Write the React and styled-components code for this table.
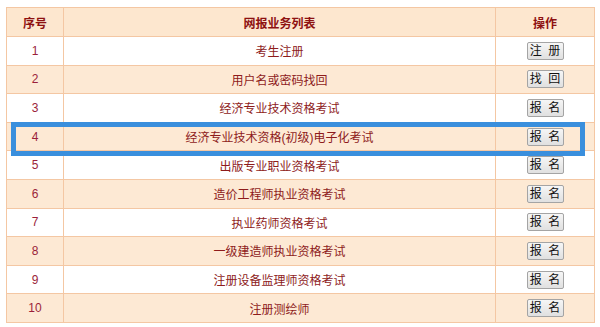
import React from 'react';
import styled, { createGlobalStyle } from 'styled-components';

const GlobalStyle = createGlobalStyle`
  html, body {
    margin: 0;
    padding: 0;
    background: #ffffff;
  }
  body {
    font-family: "Liberation Sans", "Noto Sans CJK SC", sans-serif;
  }
`;

const services = [
  { name: '考生注册', action: '注 册' },
  { name: '用户名或密码找回', action: '找 回' },
  { name: '经济专业技术资格考试', action: '报 名' },
  { name: '经济专业技术资格(初级)电子化考试', action: '报 名', marked: true },
  { name: '出版专业职业资格考试', action: '报 名' },
  { name: '造价工程师执业资格考试', action: '报 名' },
  { name: '执业药师资格考试', action: '报 名' },
  { name: '一级建造师执业资格考试', action: '报 名' },
  { name: '注册设备监理师资格考试', action: '报 名' },
  { name: '注册测绘师', action: '报 名' },
];

function App() {
  return (
    <>
      <GlobalStyle />
      <Page>
        <Table>
          <colgroup>
            <col style={{ width: 57 }} />
            <col style={{ width: 432 }} />
            <col style={{ width: 99 }} />
          </colgroup>
          <thead>
            <HeadRow>
              <HeadCell>序号</HeadCell>
              <HeadCell>网报业务列表</HeadCell>
              <HeadCell>操作</HeadCell>
            </HeadRow>
          </thead>
          <tbody>
            {services.map((s, i) => (
              <Row key={s.name} $shaded={i % 2 === 1}>
                <NumCell>{i + 1}</NumCell>
                <NameCell>
                  {s.name}
                  {s.marked && <Marker />}
                </NameCell>
                <Cell>
                  <ActionButton type="button">{s.action}</ActionButton>
                </Cell>
              </Row>
            ))}
          </tbody>
        </Table>
      </Page>
    </>
  );
}

export default App;

const Page = styled.div`
  padding: 7px 6px 5px 6px;
`;

const Table = styled.table`
  width: 588px;
  border-collapse: collapse;
  table-layout: fixed;
  border: 1px solid #f4c7a3;
  font-size: 12px;
  color: #8e1b1b;
`;

const HeadRow = styled.tr`
  height: 29px;
  background: #fde7cf;
`;

const HeadCell = styled.th`
  border: 1px solid #f4c7a3;
  padding: 0;
  font-weight: bold;
  font-size: 12px;
  color: #8e1111;
  text-align: center;
  vertical-align: middle;
`;

const Row = styled.tr`
  height: 28.6px;
  background: ${p => (p.$shaded ? '#fde9d4' : '#ffffff')};
`;

const Cell = styled.td`
  border: 1px solid #f4c7a3;
  padding: 0;
  text-align: center;
  vertical-align: middle;
`;

const NumCell = styled(Cell)`
  color: #9b1f3a;
  font-size: 12px;
`;

const NameCell = styled(Cell)`
  position: relative;
  color: #8e1b1b;
`;

const Marker = styled.span`
  position: absolute;
  left: -53px;
  right: -90px;
  top: -1px;
  bottom: -6px;
  border: 5px solid #3a8fdd;
  pointer-events: none;
`;

const ActionButton = styled.button`
  box-sizing: border-box;
  width: 37px;
  height: 18px;
  padding: 0;
  margin: 0;
  font-family: "Liberation Sans", "Noto Sans CJK SC", sans-serif;
  font-size: 12px;
  line-height: 16px;
  white-space: pre;
  word-spacing: 3px;
  color: #111111;
  background: linear-gradient(#f6f6f6, #e0e0e0);
  border: 1px solid #a4a4a4;
  border-radius: 2px;
  cursor: pointer;
`;
